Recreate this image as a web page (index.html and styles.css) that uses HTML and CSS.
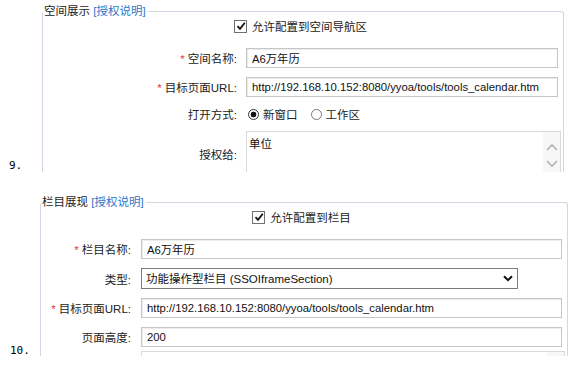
FILE: index.html
```html
<!DOCTYPE html>
<html lang="zh-CN">
<head>
    <meta charset="UTF-8">
    <title>空间展示与栏目展现</title>
    <link rel="stylesheet" href="styles.css">
</head>
<body>
    <div class="item item-space">
        <div class="num">9.</div>
        <div class="shot shot-space">
            <fieldset class="panel">
                <legend>空间展示 <a href="#" class="help">[授权说明]</a></legend>
                <div class="check-row">
                    <span class="box"><svg width="10" height="10" viewBox="0 0 10 10"><path d="M1.5 5.2 L4 7.8 L8.8 1.8" fill="none" stroke="#111" stroke-width="1.8"/></svg></span>允许配置到空间导航区
                </div>
                <div class="fields">
                    <label><span class="req">*</span>空间名称:</label>
                    <input class="text" type="text" value="A6万年历">

                    <label><span class="req">*</span>目标页面URL:</label>
                    <input class="text" type="text" value="http://192.168.10.152:8080/yyoa/tools/tools_calendar.htm">

                    <label>打开方式:</label>
                    <div class="radios">
                        <label class="opt"><input type="radio" name="open" checked>新窗口</label>
                        <label class="opt"><input type="radio" name="open">工作区</label>
                    </div>

                    <label class="top-label">授权给:</label>
                    <div class="area">
                        <div class="area-text">单位</div>
                        <div class="scroll">
                            <svg width="12" height="8" viewBox="0 0 12 8"><path d="M1 7 L6 2 L11 7" fill="none" stroke="#b4b4b4" stroke-width="1.6"/></svg>
                            <svg width="12" height="8" viewBox="0 0 12 8"><path d="M1 1 L6 6 L11 1" fill="none" stroke="#b4b4b4" stroke-width="1.6"/></svg>
                        </div>
                    </div>
                </div>
            </fieldset>
        </div>
    </div>

    <div class="item item-column">
        <div class="num">10.</div>
        <div class="shot shot-column">
            <fieldset class="panel">
                <legend>栏目展现 <a href="#" class="help">[授权说明]</a></legend>
                <div class="check-row">
                    <span class="box"><svg width="10" height="10" viewBox="0 0 10 10"><path d="M1.5 5.2 L4 7.8 L8.8 1.8" fill="none" stroke="#111" stroke-width="1.8"/></svg></span>允许配置到栏目
                </div>
                <div class="fields">
                    <label><span class="req">*</span>栏目名称:</label>
                    <input class="text" type="text" value="A6万年历">

                    <label>类型:</label>
                    <div class="select-wrap">
                        <select class="select">
                            <option>功能操作型栏目 (SSOIframeSection)</option>
                        </select>
                        <svg class="chevron" width="10" height="7" viewBox="0 0 10 7"><path d="M1 1.2 L5 5.2 L9 1.2" fill="none" stroke="#111" stroke-width="2"/></svg>
                    </div>

                    <label><span class="req">*</span>目标页面URL:</label>
                    <input class="text" type="text" value="http://192.168.10.152:8080/yyoa/tools/tools_calendar.htm">

                    <label>页面高度:</label>
                    <input class="text" type="text" value="200">

                    <label></label>
                    <div class="area area-tight">
                        <div class="area-text"></div>
                        <div class="scroll"></div>
                    </div>
                </div>
            </fieldset>
        </div>
    </div>
</body>
</html>
```

FILE: styles.css
```css
body {
    margin: 0;
    background-color: white;
    color: #333;
    font-family: "Liberation Sans", "Noto Sans CJK SC", sans-serif;
    font-size: 11.5px;
}
.item {
    display: flex;
    align-items: flex-end;
}
.item-column {
    margin-top: 19px;
}
.num {
    flex: 0 0 auto;
    width: 42px;
    box-sizing: border-box;
    padding-left: 9px;
    font-family: "DejaVu Sans Mono", monospace;
    font-size: 11px;
    line-height: 12px;
    color: #000;
}
.item-column .num {
    width: 40px;
    padding-left: 10px;
    line-height: 10px;
}
.shot {
    overflow: hidden;
    padding-top: 3px;
    box-sizing: border-box;
}
.shot-space {
    width: 522px;
    height: 172px;
}
.shot-column {
    width: 528px;
    height: 165px;
}
.panel {
    margin: 0;
    padding: 0 5px 0 0;
    border: 1px solid #cfd9e3;
    border-bottom: none;
    border-radius: 3px 3px 0 0;
    min-height: 300px;
}
legend {
    padding: 0 2px 0 1px;
    margin-left: 0;
    line-height: 16px;
    color: #222;
}
.help {
    color: #2f76c8;
    text-decoration: none;
}
.check-row {
    display: flex;
    justify-content: center;
    align-items: center;
    height: 14px;
    margin-bottom: 15px;
    color: #222;
}
.box {
    display: inline-flex;
    align-items: center;
    justify-content: center;
    width: 11px;
    height: 11px;
    border: 1px solid #707070;
    background-color: white;
    margin-right: 5px;
}
.fields {
    display: grid;
    grid-template-columns: 194px 1fr;
    column-gap: 9px;
    row-gap: 9px;
    align-items: center;
}
.item-column .fields {
    grid-template-columns: 90px 1fr;
    column-gap: 10px;
}
.fields > label {
    text-align: right;
    color: #222;
    white-space: nowrap;
}
.top-label {
    align-self: start;
    margin-top: 15px;
}
.req {
    color: #e23b3b;
    margin-right: 3px;
}
.text {
    box-sizing: border-box;
    width: 100%;
    height: 20px;
    margin: 0;
    padding: 0 5px;
    border: 1px solid #c6c6c6;
    box-shadow: inset 1px 1px 0 #ececec;
    font-family: "Liberation Sans", "Noto Sans CJK SC", sans-serif;
    font-size: 11.3px;
    color: #111;
    outline: none;
}
.radios {
    display: flex;
    align-items: center;
    height: 16px;
    gap: 11px;
    color: #222;
}
.opt {
    display: flex;
    align-items: center;
}
.opt input {
    appearance: none;
    width: 11px;
    height: 11px;
    margin: 0 4px 0 2px;
    border: 1px solid #7a7a7a;
    border-radius: 50%;
    background-color: white;
}
.opt input:checked {
    background: radial-gradient(circle, #111 0 2.6px, white 3.2px);
    border-color: #333;
}
.area {
    display: flex;
    box-sizing: border-box;
    width: calc(100% + 3px);
    height: 48px;
    border: 1px solid #dadada;
    background-color: white;
}
.area-text {
    flex: 1;
    padding: 3px 2px;
    color: #111;
}
.scroll {
    display: flex;
    flex-direction: column;
    justify-content: space-around;
    align-items: center;
    width: 17px;
    padding: 6px 0;
    background-color: #f7f7f7;
}
.area-tight {
    margin-top: -5px;
}
.select-wrap {
    position: relative;
    width: 377px;
}
.select {
    appearance: none;
    box-sizing: border-box;
    width: 100%;
    height: 21px;
    margin: 0;
    padding: 0 4px;
    border: 1px solid #7a7a7a;
    border-radius: 0;
    background-color: white;
    font-family: "Liberation Sans", "Noto Sans CJK SC", sans-serif;
    font-size: 11.5px;
    color: #111;
}
.chevron {
    position: absolute;
    right: 5px;
    top: 7px;
}
```
